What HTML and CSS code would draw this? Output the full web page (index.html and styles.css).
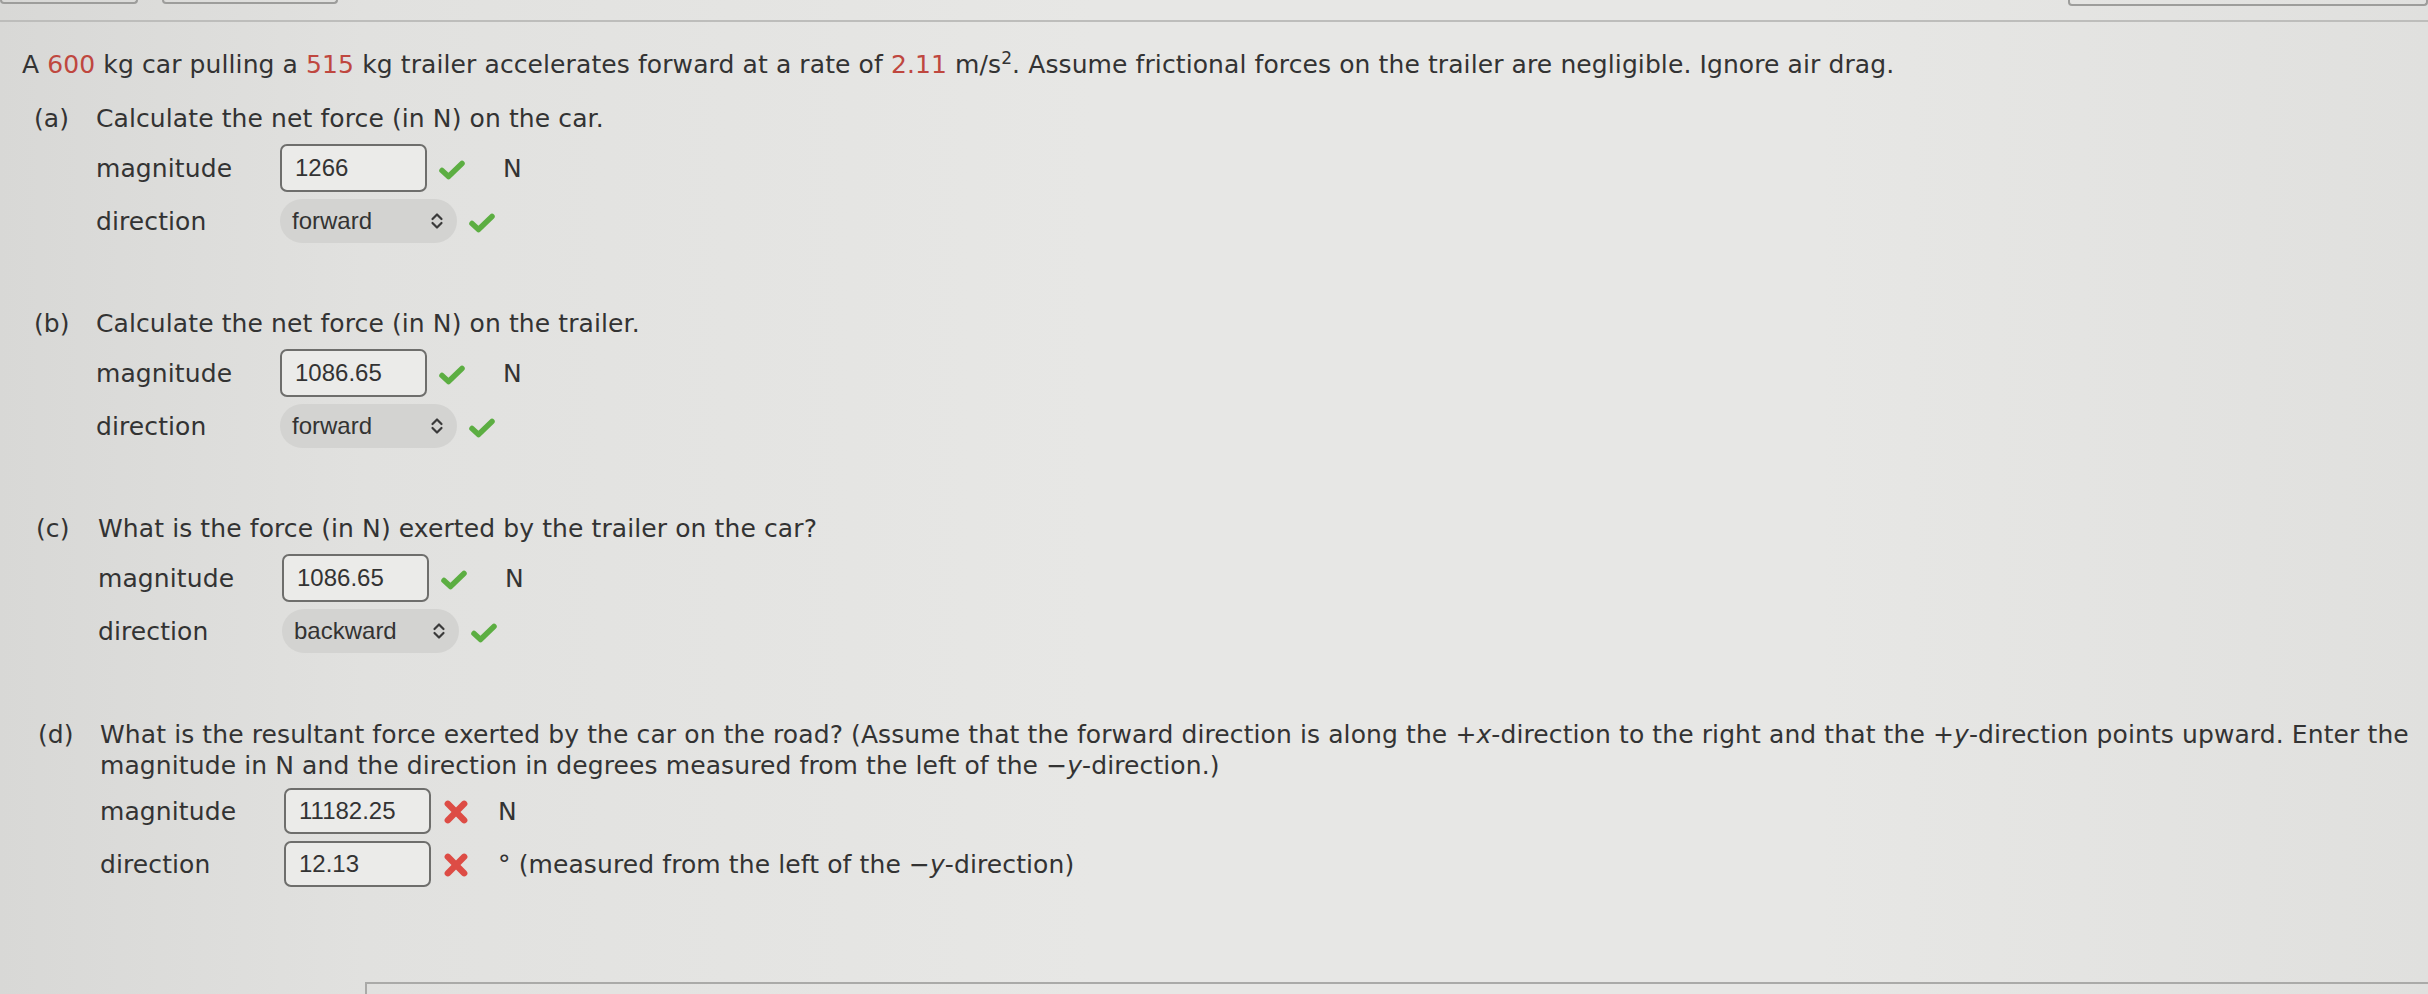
FILE: index.html
```html
<!DOCTYPE html>
<html lang="en">
<head>
<meta charset="utf-8">
<title>Car and trailer</title>
<link rel="stylesheet" href="styles.css">
</head>
<body>
<div class="topbar">
  <div class="tab tab-1"></div>
  <div class="tab tab-2"></div>
  <div class="tab tab-3"></div>
</div>

<p class="question">A <span class="num">600</span> kg car pulling a <span class="num">515</span> kg trailer accelerates forward at a rate of <span class="num">2.11</span> m/s<sup>2</sup>. Assume frictional forces on the trailer are negligible. Ignore air drag.</p>

<div class="part">
  <div class="part-head"><span class="part-label">(a)</span><span class="part-text">Calculate the net force (in N) on the car.</span></div>
  <div class="row">
    <span class="label">magnitude</span>
    <span class="field">1266</span>
    <svg class="mark" viewBox="0 0 28 22"><path d="M4 11.5 L10.5 17.5 L24 4.5"/></svg>
    <span class="unit">N</span>
  </div>
  <div class="row">
    <span class="label">direction</span>
    <span class="select">forward<svg class="chev" viewBox="0 0 16 22"><path d="M3.5 9 L8 4.5 L12.5 9 M3.5 13 L8 17.5 L12.5 13"/></svg></span>
    <svg class="mark" viewBox="0 0 28 22"><path d="M4 11.5 L10.5 17.5 L24 4.5"/></svg>
  </div>
</div>

<div class="part">
  <div class="part-head"><span class="part-label">(b)</span><span class="part-text">Calculate the net force (in N) on the trailer.</span></div>
  <div class="row">
    <span class="label">magnitude</span>
    <span class="field">1086.65</span>
    <svg class="mark" viewBox="0 0 28 22"><path d="M4 11.5 L10.5 17.5 L24 4.5"/></svg>
    <span class="unit">N</span>
  </div>
  <div class="row">
    <span class="label">direction</span>
    <span class="select">forward<svg class="chev" viewBox="0 0 16 22"><path d="M3.5 9 L8 4.5 L12.5 9 M3.5 13 L8 17.5 L12.5 13"/></svg></span>
    <svg class="mark" viewBox="0 0 28 22"><path d="M4 11.5 L10.5 17.5 L24 4.5"/></svg>
  </div>
</div>

<div class="part part-c">
  <div class="part-head"><span class="part-label">(c)</span><span class="part-text">What is the force (in N) exerted by the trailer on the car?</span></div>
  <div class="row">
    <span class="label">magnitude</span>
    <span class="field">1086.65</span>
    <svg class="mark" viewBox="0 0 28 22"><path d="M4 11.5 L10.5 17.5 L24 4.5"/></svg>
    <span class="unit">N</span>
  </div>
  <div class="row">
    <span class="label">direction</span>
    <span class="select">backward<svg class="chev" viewBox="0 0 16 22"><path d="M3.5 9 L8 4.5 L12.5 9 M3.5 13 L8 17.5 L12.5 13"/></svg></span>
    <svg class="mark" viewBox="0 0 28 22"><path d="M4 11.5 L10.5 17.5 L24 4.5"/></svg>
  </div>
</div>

<div class="part part-d">
  <div class="part-head"><span class="part-label">(d)</span><span class="part-text">What is the resultant force exerted by the car on the road? (Assume that the forward direction is along the +<i>x</i>-direction to the right and that the +<i>y</i>-direction points upward. Enter the<br>magnitude in N and the direction in degrees measured from the left of the −<i>y</i>-direction.)</span></div>
  <div class="row">
    <span class="label">magnitude</span>
    <span class="field field-d">11182.25</span>
    <svg class="mark wrong" viewBox="0 0 24 24"><path d="M5 5 L19 19 M19 5 L5 19"/></svg>
    <span class="unit">N</span>
  </div>
  <div class="row">
    <span class="label">direction</span>
    <span class="field field-d">12.13</span>
    <svg class="mark wrong" viewBox="0 0 24 24"><path d="M5 5 L19 19 M19 5 L5 19"/></svg>
    <span class="unit">° (measured from the left of the −<i>y</i>-direction)</span>
  </div>
</div>

<div class="next-box"></div>
</body>
</html>
```

FILE: styles.css
```css
html, body {
  margin: 0;
  padding: 0;
}

body {
  width: 2428px;
  height: 994px;
  overflow: hidden;
  background: linear-gradient(90deg, #d8d8d6 0%, #e1e1df 15%, #e7e7e5 45%, #e7e7e5 75%, #e0e0de 100%);
  color: #333;
  font-family: "DejaVu Sans", Verdana, sans-serif;
  font-size: 25px;
  letter-spacing: 0.1px;
}

.topbar {
  height: 20px;
  border-bottom: 2px solid #bdbdbb;
  display: flex;
  align-items: flex-start;
}

.tab {
  height: 2px;
  border: 2px solid #9d9d9b;
  border-top: none;
  border-radius: 0 0 4px 4px;
}

.tab-1 { width: 134px; }
.tab-2 { width: 172px; margin-left: 24px; }
.tab-3 { width: 356px; height: 4px; margin-left: auto; }

.question {
  margin: 27px 0 0 22px;
  line-height: 32px;
}

.question sup {
  font-size: 17px;
  line-height: 0;
}

.num {
  color: #bf473f;
}

.part {
  padding-left: 34px;
  margin-top: 22px;
}

.part + .part {
  margin-top: 65px;
}

.part-c { padding-left: 36px; }

.part.part-d {
  padding-left: 38px;
  margin-top: 66px;
}

.part-head {
  display: flex;
  line-height: 31px;
  margin-bottom: 10px;
}

.part-d .part-head {
  margin-bottom: 7px;
}

.part-label {
  flex: 0 0 62px;
}

.part-text {
  max-width: 2330px;
}

.row {
  display: flex;
  align-items: center;
  padding-left: 62px;
  margin-top: 7px;
}

.label {
  flex: 0 0 184px;
}

.field {
  box-sizing: border-box;
  width: 147px;
  height: 48px;
  border: 2px solid #6e6e6c;
  border-radius: 7px;
  background: #ebebe9;
  padding-left: 13px;
  display: flex;
  align-items: center;
  font-family: "Liberation Sans", Arial, sans-serif;
  font-size: 24px;
  letter-spacing: 0;
  color: #333;
}

.field-d {
  height: 46px;
}

.select {
  box-sizing: border-box;
  width: 177px;
  height: 44px;
  border-radius: 22px;
  background: #d3d3d1;
  padding: 0 12px 0 12px;
  display: flex;
  align-items: center;
  justify-content: space-between;
  font-family: "Liberation Sans", Arial, sans-serif;
  font-size: 24px;
  letter-spacing: 0;
  color: #333;
}

.chev {
  width: 16px;
  height: 22px;
  fill: none;
  stroke: #3a3a3a;
  stroke-width: 2.2;
  stroke-linecap: round;
  stroke-linejoin: round;
}

.mark {
  width: 28px;
  height: 22px;
  margin-left: 11px;
  margin-top: 4px;
  fill: none;
  stroke: #5cae42;
  stroke-width: 5.5;
  stroke-linecap: round;
  stroke-linejoin: round;
}

.mark.wrong {
  width: 28px;
  height: 28px;
  margin-top: 2px;
  stroke: #dd4c45;
  stroke-width: 5.5;
}

.unit {
  margin-left: 37px;
}

.mark.wrong + .unit {
  margin-left: 28px;
}

.next-box {
  margin: 95px 0 0 365px;
  height: 20px;
  border-top: 2px solid #aaaaa8;
  border-left: 2px solid #aaaaa8;
}
```
